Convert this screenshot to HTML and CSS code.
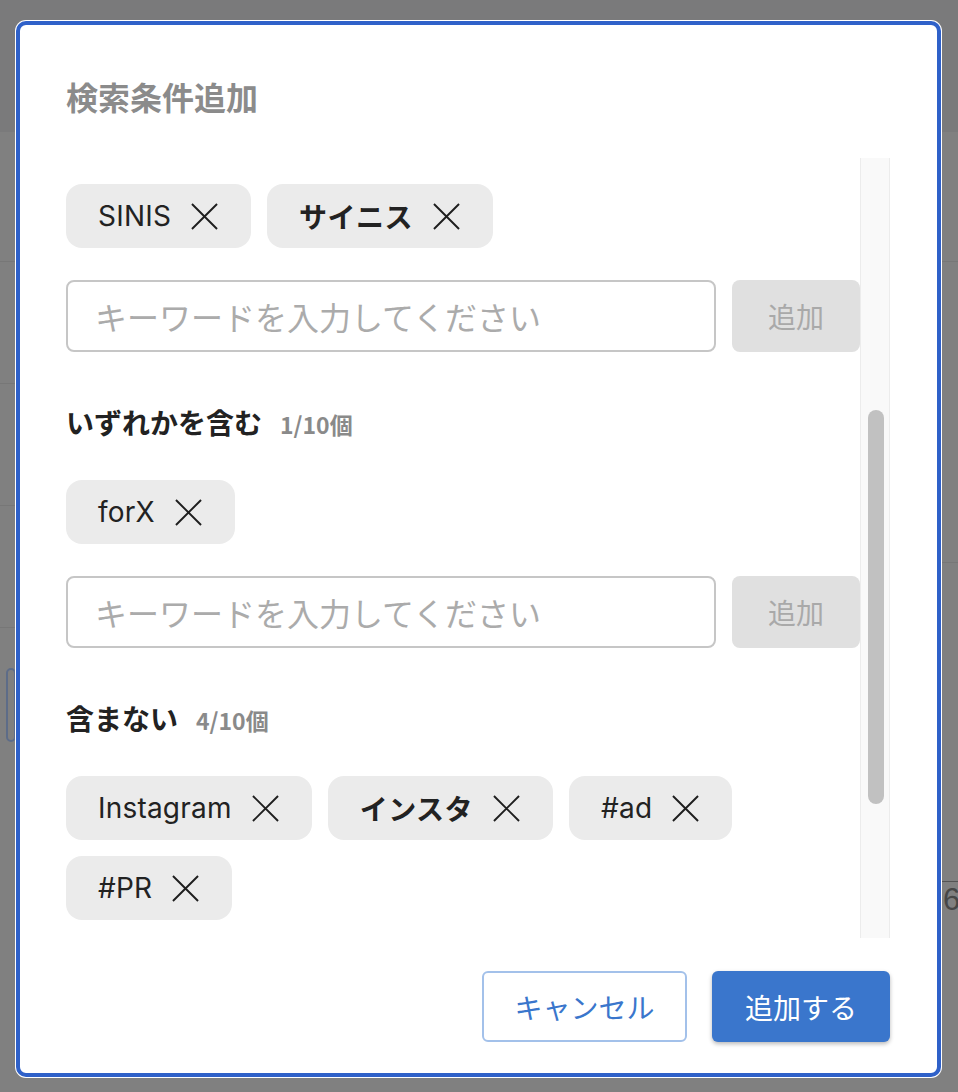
FILE: index.html
```html
<!DOCTYPE html>
<html lang="ja">
<head>
<meta charset="utf-8">
<title>検索条件追加</title>
<link rel="stylesheet" href="styles.css">
</head>
<body>
<div class="page">
  <div class="page-header"></div>
  <div class="page-body">
    <div class="side-left">
      <div class="bg-row r1"></div>
      <div class="bg-row r2"></div>
      <div class="bg-row r2"></div>
      <div class="bg-row r2"></div>
      <div class="bg-box"></div>
    </div>
    <div class="page-main"></div>
    <div class="side-right">
      <div class="bg-row r1"></div>
      <div class="bg-row r3"></div>
      <div class="bg-row r4 dark"></div>
      <div class="bg-num">6</div>
    </div>
  </div>
</div>

<div class="dialog">
  <h2 class="dialog-title">検索条件追加</h2>
  <div class="scroll-area">
    <div class="scroll-content">
      <div class="scroll-inner">
        <div class="chips">
          <span class="chip">SINIS<svg class="x" viewBox="0 0 28 28"><path d="M1 1L27 27M27 1L1 27"/></svg></span>
          <span class="chip jp">サイニス<svg class="x" viewBox="0 0 28 28"><path d="M1 1L27 27M27 1L1 27"/></svg></span>
        </div>
        <div class="input-row">
          <input class="kw-input" type="text" placeholder="キーワードを入力してください">
          <button class="add-btn" type="button">追加</button>
        </div>

        <div class="section-label"><span class="label-text">いずれかを含む</span><span class="label-count">1/10個</span></div>
        <div class="chips">
          <span class="chip">forX<svg class="x" viewBox="0 0 28 28"><path d="M1 1L27 27M27 1L1 27"/></svg></span>
        </div>
        <div class="input-row">
          <input class="kw-input" type="text" placeholder="キーワードを入力してください">
          <button class="add-btn" type="button">追加</button>
        </div>

        <div class="section-label"><span class="label-text">含まない</span><span class="label-count">4/10個</span></div>
        <div class="chips">
          <span class="chip">Instagram<svg class="x" viewBox="0 0 28 28"><path d="M1 1L27 27M27 1L1 27"/></svg></span>
          <span class="chip jp">インスタ<svg class="x" viewBox="0 0 28 28"><path d="M1 1L27 27M27 1L1 27"/></svg></span>
          <span class="chip">#ad<svg class="x" viewBox="0 0 28 28"><path d="M1 1L27 27M27 1L1 27"/></svg></span>
          <span class="chip">#PR<svg class="x" viewBox="0 0 28 28"><path d="M1 1L27 27M27 1L1 27"/></svg></span>
        </div>
      </div>
    </div>
    <div class="scroll-track"><div class="scroll-thumb"></div></div>
  </div>
  <div class="dialog-footer">
    <button class="btn-cancel" type="button">キャンセル</button>
    <button class="btn-primary" type="button">追加する</button>
  </div>
</div>
</body>
</html>
```
FILE: styles.css
```css
html, body {
  margin: 0;
  padding: 0;
}
body {
  width: 958px;
  height: 1092px;
  overflow: hidden;
  background: #808080;
  font-family: Inter, "Noto Sans CJK JP", sans-serif;
  position: relative;
}

/* dimmed background page */
.page {
  display: flex;
  flex-direction: column;
  height: 1092px;
}
.page-header {
  height: 132px;
  background: #7a7a7b;
  flex: none;
}
.page-body {
  display: flex;
  flex: 1;
}
.side-left {
  width: 16px;
  display: flex;
  flex-direction: column;
}
.page-main {
  flex: 1;
}
.side-right {
  width: 16px;
  display: flex;
  flex-direction: column;
  overflow: hidden;
}
.bg-row {
  flex: none;
  border-bottom: 1px solid #777;
}
.bg-row.r1 { height: 129px; }
.bg-row.r2 { height: 121px; }
.bg-row.r3 { height: 300px; }
.bg-row.r4 { height: 318px; }
.bg-row.dark { border-bottom-color: #545454; }
.bg-box {
  margin: 40px 0 0 6px;
  height: 70px;
  border: 2px solid #5d6c88;
  border-radius: 10px;
}
.bg-num {
  font-family: "Liberation Sans", sans-serif;
  font-size: 31px;
  line-height: 36px;
  color: #474747;
  padding-left: 1px;
  white-space: nowrap;
}

/* dialog */
.dialog {
  position: absolute;
  left: 16px;
  top: 21px;
  width: 925px;
  height: 1056px;
  box-sizing: border-box;
  border: 4px solid #2f61c9;
  border-radius: 10px;
  box-shadow: 0 0 0 1px #ffffff;
  background: #ffffff;
  padding: 51px 47px 31px 46px;
  display: flex;
  flex-direction: column;
}
.dialog-title {
  margin: 0;
  height: 40px;
  line-height: 40px;
  font-size: 32px;
  font-weight: 700;
  color: #8b8b8b;
  font-family: "Noto Sans CJK JP", sans-serif;
}
.scroll-area {
  margin-top: 42px;
  height: 780px;
  display: flex;
  flex: none;
}
.scroll-content {
  width: 794px;
  overflow: hidden;
}
.scroll-inner {
  padding-top: 26px;
}
.scroll-track {
  width: 30px;
  box-sizing: border-box;
  background: #f9f9f9;
  border-left: 1px solid #ececec;
  border-right: 1px solid #ececec;
  padding-left: 7px;
}
.scroll-thumb {
  margin-top: 252px;
  width: 16px;
  height: 394px;
  background: #c1c1c1;
  border-radius: 8px;
}

.chips {
  display: flex;
  flex-wrap: wrap;
  gap: 16px;
  margin-bottom: 32px;
}
.chip {
  display: inline-flex;
  align-items: center;
  height: 64px;
  box-sizing: border-box;
  padding: 0 33px 0 32px;
  background: #ebebeb;
  border-radius: 16px;
  font-size: 28px;
  letter-spacing: 0.2px;
  color: #222;
}
.chip.jp {
  font-weight: 700;
  letter-spacing: 0.5px;
  font-family: "Noto Sans CJK JP", sans-serif;
}
.x {
  width: 27px;
  height: 27px;
  margin-left: 20px;
  flex: none;
}
.x path {
  stroke: #1e1e1e;
  stroke-width: 2;
  fill: none;
}

.input-row {
  display: flex;
  gap: 16px;
  height: 72px;
}
.kw-input {
  flex: 1;
  min-width: 0;
  height: 72px;
  box-sizing: border-box;
  border: 2px solid #c6c6c6;
  border-radius: 8px;
  padding: 0 0 0 27px;
  margin: 0;
  font-size: 32px;
  font-family: "Noto Sans CJK JP", sans-serif;
  color: #222;
  background: #fff;
  outline: none;
}
.kw-input::placeholder {
  color: #ababab;
}
.add-btn {
  width: 128px;
  height: 72px;
  border: 0;
  border-radius: 8px;
  background: #e0e0e0;
  color: #a9a9a9;
  font-size: 28px;
  font-family: "Noto Sans CJK JP", sans-serif;
  padding: 0;
  margin: 0;
}

.section-label {
  margin-top: 50px;
  height: 40px;
  display: flex;
  align-items: baseline;
  gap: 18px;
  margin-bottom: 38px;
  font-family: "Noto Sans CJK JP", sans-serif;
}
.label-text {
  font-size: 28px;
  line-height: 40px;
  font-weight: 700;
  color: #222;
}
.label-count {
  font-size: 23px;
  line-height: 40px;
  font-weight: 700;
  color: #8a8a8a;
}

.dialog-footer {
  margin-top: 33px;
  display: flex;
  justify-content: flex-end;
  gap: 25px;
}
.btn-cancel,
.btn-primary {
  height: 71px;
  box-sizing: border-box;
  border-radius: 6px;
  font-size: 28px;
  line-height: 40px;
  font-family: "Noto Sans CJK JP", sans-serif;
  padding: 0;
  white-space: nowrap;
}
.btn-cancel {
  width: 205px;
  background: #fff;
  border: 2px solid #a3c1ea;
  color: #3a76cc;
}
.btn-primary {
  width: 178px;
  background: #3a76cc;
  border: 0;
  color: #fff;
  box-shadow: 0 2px 4px rgba(0, 0, 0, 0.28);
}
```
